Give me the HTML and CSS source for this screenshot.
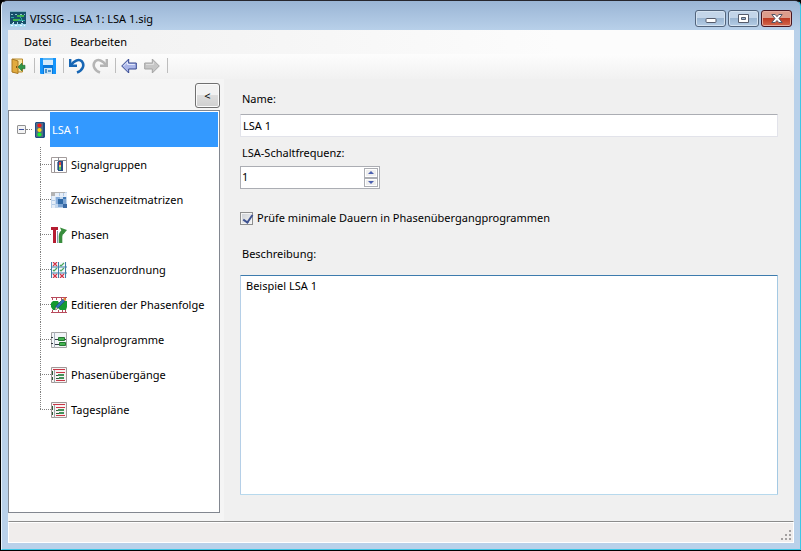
FILE: index.html
```html
<!DOCTYPE html>
<html lang="de">
<head>
  <meta charset="UTF-8">
  <meta name="viewport" content="width=device-width, initial-scale=1.0">
  <title>VISSIG - LSA 1: LSA 1.sig</title>
  <link rel="stylesheet" href="styles.css">
</head>
<body>
  <div class="window">
    <header class="titlebar">
      <svg class="icon" viewBox="0 0 16 16" shape-rendering="crispEdges">
        <rect width="16" height="16" fill="#17506b"/>
        <path d="M0 0h16v1H0z" fill="#7fb2c4"/>
        <path d="M1 3h2m2 0h2m3 0h2m2 0h1" stroke="#8fc4cf"/>
        <rect x="7" y="4" width="7" height="2" fill="#3fb54a"/>
        <rect x="3" y="8" width="7" height="2" fill="#3fb54a"/>
        <path d="M10 5l2 4H8M1 6h3M11 9h4" stroke="#2da8a0" fill="none"/>
        <path d="M0 16v-3h2v-1h2v1h3v-2h1v2h3v-1h2v1h3v3z" fill="#a6d8ef"/>
        <path d="M1 14h2m2 0h2m3 0h2m2 0h1M3 11h1m8-1h1" stroke="#e6f7fc"/>
      </svg>
      <h1>VISSIG - LSA 1: LSA 1.sig</h1>
      <div class="window-buttons">
        <button type="button" class="win-btn" aria-label="Minimieren">
          <svg width="12" height="12" viewBox="0 0 12 12"><rect x="1" y="5.500" width="10" height="4" rx="1" fill="#fff" stroke="#555b6b"/></svg>
        </button>
        <button type="button" class="win-btn" aria-label="Maximieren">
          <svg width="12" height="12" viewBox="0 0 12 12"><path d="M.5 1.500h10v8H.5zM3.500 4.500v2h4v-2z" fill="#fff" fill-rule="evenodd" stroke="#555b6b"/></svg>
        </button>
        <button type="button" class="win-btn close" aria-label="Schließen">
          <svg width="12" height="12" viewBox="0 0 12 12"><path d="M.8 1.500h3.400L6 3.700l1.800-2.200h3.400L8 5.500l3.200 4H7.800L6 7.500l-1.800 2H.8l3.200-4z" fill="#fff" stroke="#535666"/></svg>
        </button>
      </div>
    </header>

    <nav class="menubar">
      <button type="button">Datei</button>
      <button type="button">Bearbeiten</button>
    </nav>

    <div class="toolbar">
      <button type="button" aria-label="Beenden">
        <svg class="icon" viewBox="0 0 16 16">
          <path d="M1.500 1h10v13h-10z" fill="#f6e3a0" stroke="#b98a2c"/>
          <path d="M1 1l6 2v12.500L1 14z" fill="#e2ab3e" stroke="#a97823"/>
          <path d="M5 8h1v2H5z" fill="#7a5618"/>
          <path d="M7 9l4-4v2.300h3v3.400h-3V13z" fill="#31964a" stroke="#216f36" stroke-width=".6"/>
        </svg>
      </button>
      <span class="separator"></span>
      <button type="button" aria-label="Speichern">
        <svg class="icon" viewBox="0 0 16 16">
          <path d="M0 0h16v16H1l-1-1z" fill="#0878dc"/>
          <path d="M0 0h3v16H1l-1-1zM13 0h3v16h-3z" fill="#1595fb"/>
          <path d="M3 0h10v7H3z" fill="#d5eafa"/>
          <path d="M3 0h10v2H3z" fill="#56b4f7"/>
          <path d="M4 10h8v6H4z" fill="#c7e2f5"/>
          <path d="M5 11h2v4H5zM8 12h3v2H8z" fill="#4e93cb"/>
        </svg>
      </button>
      <span class="separator"></span>
      <button type="button" aria-label="Rückgängig">
        <svg class="icon" viewBox="0 0 16 16">
          <path d="M2 7C5 2.500 10 .5 13 3.500c3 4 .5 9-5 11" fill="none" stroke="#1766b4" stroke-width="2.600"/>
          <path d="M1.200 1v6.800H8" fill="none" stroke="#1766b4" stroke-width="2.400"/>
        </svg>
      </button>
      <button type="button" aria-label="Wiederholen" disabled>
        <svg class="icon" viewBox="0 0 16 16">
          <path d="M14 7C11 2.500 6 .5 3 3.500c-3 4-.5 9 5 11" fill="none" stroke="#b5b5b5" stroke-width="2.600"/>
          <path d="M14.800 1v6.800H8" fill="none" stroke="#b5b5b5" stroke-width="2.400"/>
        </svg>
      </button>
      <span class="separator"></span>
      <button type="button" aria-label="Zurück">
        <svg class="icon" viewBox="0 0 16 16">
          <path d="M.7 8l7-7v4h7.600v6H7.700v4z" fill="#a9b5e8" stroke="#34478f"/>
          <path d="M2.500 8l4-4v2.500h7.300" fill="none" stroke="#e3e8fa"/>
        </svg>
      </button>
      <button type="button" aria-label="Vorwärts" disabled>
        <svg class="icon" viewBox="0 0 16 16">
          <path d="M15.300 8l-7-7v4H.7v6h7.600v4z" fill="#c6c6c6" stroke="#a3a3a3"/>
          <path d="M2 6.500h7.500V4" fill="none" stroke="#dedede"/>
        </svg>
      </button>
      <span class="separator"></span>
    </div>

    <main class="content">
      <aside class="sidebar">
        <button type="button" class="collapse-btn">&lt;</button>
        <div class="tree">
          <div class="root">
            <button type="button" class="expander" aria-label="Zuklappen"></button>
            <span class="dots"></span>
            <svg class="icon" viewBox="0 0 16 16">
              <path d="M4 0h8l1 1v14l-1 1H4l-1-1V1z" fill="#1d4e86"/>
              <path d="M4 1h7v14H4z" fill="#536c83"/>
              <circle cx="7.500" cy="3.500" r="2.100" fill="#f01c1c"/>
              <circle cx="7.500" cy="8" r="2.100" fill="#ffd51c"/>
              <circle cx="7.500" cy="12.500" r="2.100" fill="#18ef2e"/>
            </svg>
            <a href="#" class="root-label">LSA 1</a>
          </div>
          <ul>
            <li>
              <svg class="icon" viewBox="0 0 16 16">
                <path d="M.5.5h15v15H.5z" fill="#fff" stroke="#a49c9c"/>
                <path d="M3.500 15V3.500H15M7.500 0v5" fill="none" stroke="#8e8e94"/>
                <path d="M7 4h5v10H7z" fill="#294d84"/>
                <path d="M6 5h1v8H6z" fill="#6f8fb5"/>
                <path d="M8 5h2v3H8z" fill="#e04444"/><path d="M8 8h2v2H8z" fill="#ead05a"/><path d="M8 10h2v3H8z" fill="#58c76a"/>
              </svg>
              <a href="#">Signalgruppen</a>
            </li>
            <li>
              <svg class="icon" viewBox="0 0 16 16" shape-rendering="crispEdges">
                <path d="M0 0h16v16H0z" fill="#c3d7ed"/>
                <path d="M4 1h12v4H4zM1 4h3v12H1z" fill="#e6eef8"/>
                <path d="M0 0h14v1H4v3H0z" fill="#b3b3b3"/>
                <path d="M5 5h4v3H5zM5 8h2v4H5z" fill="#86addb"/>
                <path d="M7 7h5v5H7z" fill="#2f69a6"/>
                <path d="M12 7h3v5h-3zM7 12h5v3H7z" fill="#7ea6d4"/>
                <path d="M12 12h4v4h-4z" fill="#3a6aa5"/>
                <path d="M12 5h3v2h-3z" fill="#3f78b6"/>
                <path d="M1 8h3M1 12h3M8 1v3M12 1v3" stroke="#b3cbe6" fill="none"/>
              </svg>
              <a href="#">Zwischenzeitmatrizen</a>
            </li>
            <li>
              <svg class="icon" viewBox="0 0 16 16">
                <path d="M0 0h7v3H5v13H2V3H0z" fill="#b51c31"/>
                <path d="M6.500 4v12" stroke="#8298b0"/>
                <path d="M9.500 16V9.500c0-3 1-4.500 3.500-5.500" fill="none" stroke="#398d3d" stroke-width="3.600"/>
                <path d="M9 .5l7 2.500-4 4.500z" fill="#398d3d"/>
              </svg>
              <a href="#">Phasen</a>
            </li>
            <li>
              <svg class="icon" viewBox="0 0 16 16">
                <path d="M0 0h16v16H0z" fill="#f4f9fb"/>
                <path d="M.5 0v16M7.500 0v16M14.500 0v16M0 5h16M0 11h16" stroke="#3e7fa8" fill="none"/>
                <path d="M2 0l4 4M6 0l-4 4M2 12l4 4M6 12l-4 4M9 12l4 4M13 12l-4 4" stroke="#d23448" stroke-width="1.200"/>
                <path d="M9 3l1 1 3-3M2 8l1 1 3-3M9 8l1 1 3-3" stroke="#4aa65c" stroke-width="1.200" fill="none"/>
              </svg>
              <a href="#">Phasenzuordnung</a>
            </li>
            <li>
              <svg class="icon" viewBox="0 0 16 16">
                <path d="M0 0h16v16H0z" fill="#fff"/>
                <path d="M0 .5h16M0 15.500h16M1.500 1v2M5.500 1v2M10.500 1v2M14.500 1v2M1.500 13v2M7.500 13v2M11.500 13v2M14.500 13v2" stroke="#b84b5c" fill="none"/>
                <path d="M0 6l2-2h5l1 2 2-2h6v6l-1 3H9l-2-2-2 2H2l-2-3z" fill="#139a31"/>
                <path d="M4 13l1-4 7-7 2 2-7 7z" fill="#2e73b5" stroke="#24466b" stroke-width=".6"/>
                <path d="M12 2l1.500-1.500L15.500 3 14 4z" fill="#eb8c36"/>
                <path d="M4 13l1-3 1.500 1.500z" fill="#f3dca0"/>
              </svg>
              <a href="#">Editieren der Phasenfolge</a>
            </li>
            <li>
              <svg class="icon" viewBox="0 0 16 16">
                <path d="M.5.5h15v15H.5z" fill="#f2f5f8" stroke="#a3a3a3"/>
                <path d="M3.500 0v16" stroke="#a8b0bb"/>
                <path d="M0 5.500h2M0 11.500h2M4 7.500h11M4 12.500h11" stroke="#333b44"/>
                <path d="M7.500 5.500h6v3h-6zM8.500 10.500h6v3h-6z" fill="#43b550" stroke="#277733"/>
              </svg>
              <a href="#">Signalprogramme</a>
            </li>
            <li>
              <svg class="icon" viewBox="0 0 16 16">
                <path d="M.5.500h15v15H.5z" fill="#f7f3f3" stroke="#a09797"/>
                <path d="M3.500 3v13" stroke="#9ba4a6"/>
                <path d="M2 2.500h12M5 5.500h9M5 13.500h9" stroke="#c93545"/>
                <path d="M1.500 4v4M1.500 10v3M5 8.500h3M5 11.500h4" stroke="#2c5b36"/>
                <path d="M7 7h6v2H7zM8 10h5v2H8z" fill="#43925a"/>
              </svg>
              <a href="#">Phasenübergänge</a>
            </li>
            <li>
              <svg class="icon" viewBox="0 0 16 16">
                <path d="M.5.500h15v15H.5z" fill="#f7f3f3" stroke="#a09797"/>
                <path d="M3.500 3v13" stroke="#9ba4a6"/>
                <path d="M2 2.500h12M5 5.500h9M5 13.500h9" stroke="#c93545"/>
                <path d="M1.500 4v4M1.500 10v3M5 8.500h3M5 11.500h4" stroke="#2c5b36"/>
                <path d="M7 7h6v2H7zM8 10h5v2H8z" fill="#43925a"/>
              </svg>
              <a href="#">Tagespläne</a>
            </li>
          </ul>
        </div>
      </aside>

      <form class="details">
        <label class="field-label" for="name">Name:</label>
        <input type="text" id="name" class="name-input" value="LSA 1">

        <label class="field-label" for="frequency">LSA-Schaltfrequenz:</label>
        <div class="spinner">
          <input type="text" id="frequency" inputmode="numeric" value="1">
          <div class="spin-buttons">
            <button type="button" class="spin-btn" aria-label="Erhöhen" onclick="step(1)">
              <svg width="6" height="3" viewBox="0 0 6 3"><path d="M0 3l3-3 3 3z" fill="#4a5fb0"/></svg>
            </button>
            <button type="button" class="spin-btn" aria-label="Verringern" onclick="step(-1)">
              <svg width="6" height="3" viewBox="0 0 6 3"><path d="M0 0h6L3 3z" fill="#4a5fb0"/></svg>
            </button>
          </div>
        </div>

        <div class="check-row">
          <input type="checkbox" id="check" checked>
          <label for="check">Prüfe minimale Dauern in Phasenübergangprogrammen</label>
        </div>

        <label class="field-label" for="description">Beschreibung:</label>
        <textarea id="description">Beispiel LSA 1</textarea>
      </form>
    </main>

    <footer class="statusbar">
      <svg width="11" height="11" viewBox="0 0 11 11" shape-rendering="crispEdges">
        <path d="M8 0h2v2H8zM4 4h2v2H4zM8 4h2v2H8zM0 8h2v2H0zM4 8h2v2H4zM8 8h2v2H8z" fill="#a3a0a0"/>
      </svg>
    </footer>
  </div>

  <script>
    const frequency = document.getElementById('frequency');

    function step(amount) {
      frequency.value = Math.max(1, Number(frequency.value) + amount);
    }
  </script>
</body>
</html>
```
FILE: styles.css
```css
* {
  box-sizing: border-box;
}
body {
  margin: 0;
  background: #000;
  color: #000;
  font-family: 'Noto Sans', 'Open Sans', sans-serif;
  font-size: 11px;
  line-height: 16px;
}
button, input, textarea {
  font: inherit;
  color: inherit;
}
button {
  padding: 0;
  border: none;
  background: none;
}
a {
  color: inherit;
  text-decoration: none;
}
.icon {
  display: block;
  flex: none;
  width: 16px;
  height: 16px;
}
.window {
  display: flex;
  flex-direction: column;
  min-height: calc(100vh - 1px);
  margin: 0 0 1px 1px;
  padding: 0 6px 6px;
  background: linear-gradient(#9ab5d5, #b9d1ea 30px, #b9d1ea);
  border: 1px solid #e8f2fb;
  border-top: 1px solid #26262e;
  border-right-color: #3cc6e6;
  border-bottom-color: #3cc6e6;
  border-radius: 6px 6px 0 0;
}
/* Title bar */
.titlebar {
  display: flex;
  align-items: center;
  height: 29px;
  padding: 6px 2px 0;
}
.titlebar h1 {
  flex: 1;
  margin: 0 0 0 4px;
  font-size: 11px;
  font-weight: normal;
}
.window-buttons {
  display: flex;
  gap: 2px;
}
.win-btn {
  display: flex;
  align-items: center;
  justify-content: center;
  width: 31px;
  height: 17px;
  border: 1px solid #52647c;
  border-radius: 3px;
  background: linear-gradient(#c3d5e9 50%, #9bb6d2 50%, #b5cde6);
  box-shadow: inset 0 0 0 1px #d5e3f1;
}
.win-btn.close {
  border-color: #471520;
  background: linear-gradient(#dc9c8c 50%, #bd3a23 50%, #d4694d);
  box-shadow: inset 0 0 0 1px #e5aca0;
}
/* Menu and toolbar */
.menubar {
  display: flex;
  gap: 19px;
  height: 24px;
  padding: 0 16px;
  background: linear-gradient(to right, #f0f0f0, #fcfcfc 70%);
}
.toolbar {
  display: flex;
  align-items: center;
  height: 25px;
  padding: 0 3px 2px;
  background: linear-gradient(#fdfdfd, #f1f1f1);
}
.toolbar button {
  margin-right: 7px;
}
.separator {
  width: 1px;
  height: 15px;
  margin-right: 5px;
  background: #bdbdbd;
}
/* Sidebar */
.content {
  display: flex;
  flex: 1;
  background: #f0f0f0;
}
.sidebar {
  display: flex;
  flex-direction: column;
  width: 216px;
  padding: 4px 4px 8px 0;
  background: #f5f5f5;
}
.collapse-btn {
  align-self: flex-end;
  width: 25px;
  height: 25px;
  margin-bottom: 2px;
  border: 1px solid #707070;
  border-radius: 3px;
  background: linear-gradient(#f2f2f2 50%, #dddddd 50%, #cfcfcf);
  box-shadow: inset 0 0 0 1px #fbfbfb;
}
.tree {
  flex: 1;
  padding: 1px;
  background: #fff;
  border: 1px solid #828790;
}
.root {
  display: flex;
  align-items: center;
  height: 35px;
  padding-left: 7px;
}
.expander {
  width: 9px;
  height: 9px;
  border: 1px solid #919191;
  border-radius: 1px;
  background: linear-gradient(#3b4fa0, #3b4fa0) center / 5px 1px no-repeat #f3f3f3;
}
.dots {
  width: 6px;
  border-top: 1px dotted #808080;
}
.root-label {
  display: flex;
  flex: 1;
  align-items: center;
  height: 35px;
  margin-left: 2px;
  padding-left: 2px;
  background: #3399ff;
  color: #fff;
}
.tree ul {
  margin: 0 0 0 30px;
  padding: 0;
  list-style: none;
}
.tree li {
  display: flex;
  align-items: center;
  gap: 4px;
  height: 35px;
  padding-left: 11px;
  /* dotted branch: vertical line, then the arm to the icon */
  background:
    repeating-linear-gradient(#808080 0 1px, transparent 1px 2px) 0 0 / 1px 100% no-repeat,
    repeating-linear-gradient(to right, #808080 0 1px, transparent 1px 2px) 0 17px / 11px 1px no-repeat;
}
.tree li:last-child {
  background-size: 1px 18px, 11px 1px;
}
/* Details form */
.details {
  display: flex;
  flex: 1;
  flex-direction: column;
  padding: 12px 16px 26px;
}
.field-label {
  align-self: flex-start;
  margin: 0 0 7px 2px;
}
.name-input {
  height: 23px;
  margin-bottom: 8px;
  padding: 0 2px;
  border: 1px solid #e2e3ea;
  border-top-color: #abadb3;
  border-radius: 1px;
  background: #fff;
}
.spinner {
  display: flex;
  width: 140px;
  height: 23px;
  margin: -2px 0 21px;
  padding: 1px;
  border: 1px solid #abadb3;
  background: #fff;
}
.spinner input {
  flex: 1;
  min-width: 0;
  padding: 0 0 2px;
  border: none;
  outline: none;
}
.spin-buttons {
  display: flex;
  flex-direction: column;
  width: 14px;
}
.spin-btn {
  display: flex;
  flex: 1;
  align-items: center;
  justify-content: center;
  border: 1px solid #abadb3;
  background: #efefef;
  box-shadow: inset 0 0 0 1px #fff;
}
.check-row {
  display: flex;
  align-items: center;
  gap: 4px;
  margin-bottom: 20px;
}
.check-row input {
  appearance: none;
  width: 13px;
  height: 13px;
  margin: 0;
  border: 1px solid #8e8f8f;
  background: linear-gradient(135deg, #cbcfd5, #f6f6f6);
  box-shadow: inset 0 0 0 1px #f4f4f4;
}
.check-row input:checked::before {
  content: '';
  display: block;
  width: 4px;
  height: 8px;
  margin: 0 0 0 4px;
  border: solid #3f5391;
  border-width: 0 2px 2px 0;
  transform: rotate(35deg);
}
textarea {
  flex: 1;
  min-height: 60px;
  margin-top: 6px;
  padding: 2px 5px;
  border: 1px solid #b5cfe7;
  border-top-color: #3d7bad;
  border-right-color: #a4c9e3;
  border-bottom-color: #b7d9ed;
  border-radius: 1px;
  background: #fff;
  outline: none;
  resize: none;
}
/* Status bar */
.statusbar {
  display: flex;
  align-items: flex-end;
  justify-content: flex-end;
  height: 22px;
  padding: 0 1px 1px;
  border: 1px solid #fff;
  border-top: 1px solid #8c8c8c;
  background: #f0edec;
  box-shadow: inset 0 1px #fff;
}
```
